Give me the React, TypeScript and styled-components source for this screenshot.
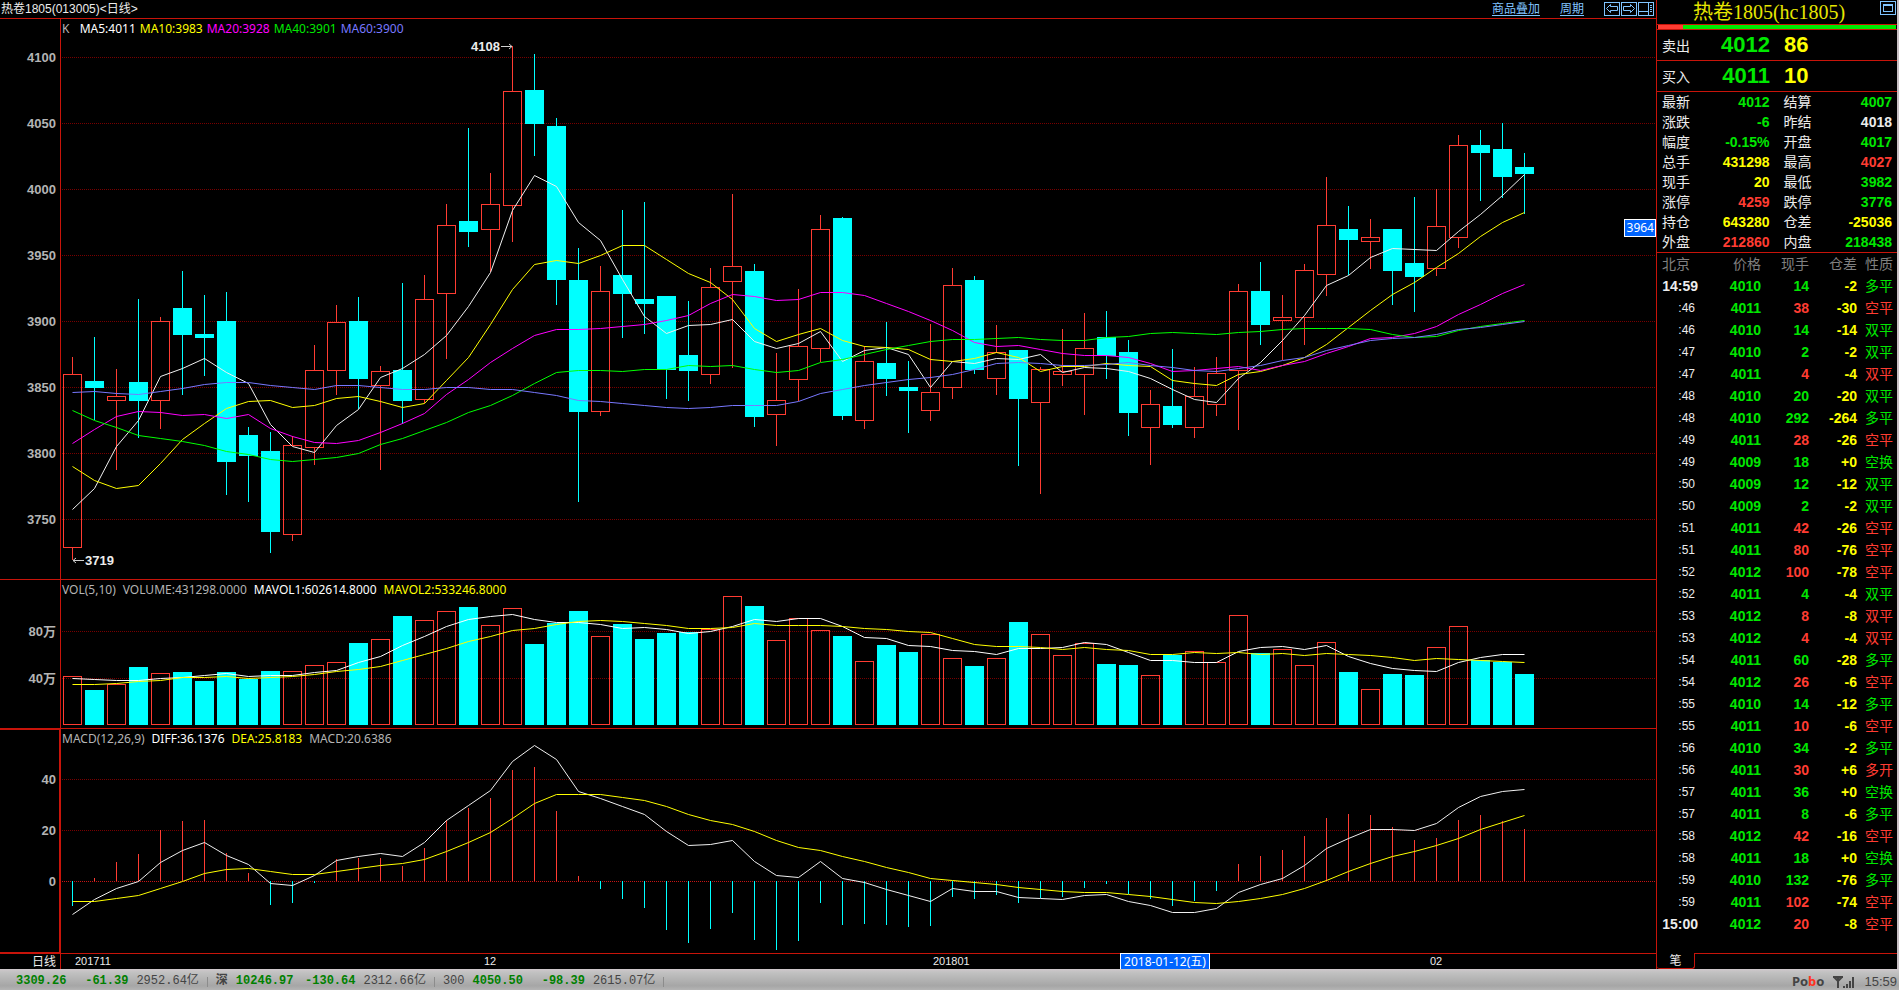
import React from "react";
import styled, { createGlobalStyle, css } from "styled-components";

/* ---------- palette ---------- */
const c = {
  line: "#c8140a",
  grid: "#780000",
  up: "#ff3c32",
  down: "#00ffff",
  green: "#00e800",
  yellow: "#ffff00",
  white: "#ececec",
  gray: "#b4b4b4",
  dim: "#808080",
  magenta: "#ff00ff",
  violet: "#7878ff",
  link: "#80c4ff",
  badge: "#0064ff",
};

const sans = `"Liberation Sans", "Noto Sans CJK SC", sans-serif`;
const narrow = `"Noto Sans", "Noto Sans CJK SC", sans-serif`;

/* ---------- data ---------- */
type Candle = [dir: "u" | "d", high: number, top: number, bottom: number, low: number];

/* Chart rows, counted in pixels from the top of the window. */
const candles: Candle[] = [
  ["u", 357, 374, 547, 560], ["d", 337, 381, 388, 420], ["u", 369, 396, 400, 470], ["d", 299, 382, 401, 438],
  ["u", 317, 321, 400, 429], ["d", 271, 308, 335, 395], ["d", 295, 334, 338, 376], ["d", 292, 321, 462, 495],
  ["d", 427, 435, 456, 502], ["d", 432, 451, 532, 553], ["u", 436, 445, 534, 541], ["u", 345, 370, 447, 465],
  ["u", 305, 322, 370, 395], ["d", 297, 321, 379, 409], ["u", 366, 371, 385, 470], ["d", 283, 370, 401, 424],
  ["u", 275, 299, 399, 403], ["u", 204, 225, 293, 359], ["d", 128, 221, 232, 247], ["u", 173, 204, 229, 272],
  ["u", 46, 91, 205, 242], ["d", 54, 90, 124, 156], ["d", 118, 126, 280, 305], ["d", 248, 280, 412, 502],
  ["u", 266, 291, 411, 416], ["d", 210, 275, 294, 338], ["d", 202, 299, 304, 334], ["d", 296, 296, 370, 399],
  ["d", 301, 355, 371, 401], ["u", 268, 287, 374, 384], ["u", 194, 266, 281, 368], ["d", 264, 271, 417, 427],
  ["u", 353, 400, 414, 446], ["u", 289, 346, 379, 401], ["u", 215, 229, 348, 362], ["d", 217, 218, 416, 420],
  ["u", 346, 361, 420, 429], ["d", 322, 363, 379, 396], ["d", 361, 387, 391, 433], ["u", 324, 392, 410, 421],
  ["u", 268, 285, 387, 399], ["d", 276, 280, 370, 374], ["u", 325, 352, 378, 395], ["d", 350, 350, 399, 466],
  ["u", 367, 369, 402, 494], ["u", 329, 371, 374, 386], ["u", 313, 348, 374, 415], ["d", 311, 337, 356, 379],
  ["d", 340, 352, 413, 436], ["u", 390, 404, 427, 465], ["d", 349, 406, 425, 428], ["u", 367, 396, 427, 438],
  ["u", 357, 373, 404, 416], ["u", 284, 291, 370, 430], ["d", 262, 291, 325, 345], ["u", 295, 317, 320, 360],
  ["u", 264, 270, 317, 345], ["u", 177, 225, 274, 296], ["d", 206, 229, 240, 275], ["u", 219, 237, 241, 269],
  ["d", 229, 229, 271, 305], ["d", 197, 263, 277, 312], ["u", 189, 226, 268, 276], ["u", 135, 145, 237, 248],
  ["d", 130, 145, 153, 201], ["d", 123, 149, 177, 198], ["d", 153, 167, 174, 214],
];

const ma5 = [509, 488, 446, 420, 376, 368, 358, 372, 383, 424, 446, 452, 425, 409, 377, 368, 354, 335, 306, 272, 210, 175, 186, 222, 240, 279, 316, 333, 325, 324, 319, 341, 348, 343, 331, 361, 350, 347, 354, 387, 361, 363, 358, 359, 354, 372, 367, 368, 371, 378, 389, 399, 402, 378, 362, 340, 315, 285, 275, 257, 248, 249, 250, 231, 214, 195, 174];
const ma10 = [466, 480, 488, 485, 463, 439, 423, 408, 401, 400, 407, 405, 398, 396, 401, 407, 403, 380, 357, 324, 289, 264, 260, 263, 255, 245, 245, 259, 273, 282, 299, 328, 341, 334, 328, 340, 346, 347, 349, 359, 361, 358, 352, 357, 371, 366, 366, 363, 365, 366, 380, 383, 385, 374, 371, 365, 357, 344, 327, 310, 294, 282, 267, 253, 236, 222, 212];
const ma20 = [443, 429, 416, 411, 412, 415, 414, 418, 414, 428, 436, 442, 443, 440, 432, 423, 413, 394, 379, 362, 348, 335, 329, 329, 328, 326, 324, 320, 315, 303, 294, 296, 300, 299, 292, 292, 295, 303, 311, 320, 330, 342, 346, 345, 349, 353, 355, 355, 357, 363, 371, 370, 368, 366, 370, 365, 361, 353, 346, 338, 337, 333, 326, 314, 304, 293, 284];
const ma40 = [410, 420, 427, 435, 438, 441, 445, 451, 454, 459, 461, 459, 457, 453, 444, 438, 430, 422, 412, 405, 395, 383, 372, 370, 370, 371, 369, 369, 365, 366, 365, 369, 372, 370, 362, 359, 354, 349, 345, 341, 339, 339, 338, 337, 339, 340, 340, 337, 336, 333, 332, 333, 334, 332, 331, 329, 328, 328, 328, 329, 334, 337, 336, 330, 326, 323, 320];
const ma60 = [392, 391, 393, 394, 391, 388, 384, 382, 382, 385, 387, 389, 385, 385, 387, 389, 389, 387, 387, 389, 389, 392, 395, 400, 401, 403, 405, 407, 408, 407, 405, 405, 405, 401, 393, 389, 385, 382, 379, 377, 374, 369, 363, 362, 363, 365, 365, 364, 362, 365, 367, 370, 371, 368, 365, 360, 357, 350, 345, 340, 338, 337, 334, 329, 327, 324, 321];

const volume = [676, 690, 684, 667, 673, 672, 681, 672, 679, 671, 671, 665, 662, 643, 639, 616, 620, 611, 607, 625, 608, 644, 623, 611, 636, 624, 639, 633, 632, 629, 596, 606, 640, 618, 630, 636, 661, 645, 652, 634, 658, 666, 658, 622, 634, 655, 643, 664, 665, 675, 655, 651, 662, 615, 653, 649, 665, 642, 672, 689, 674, 675, 647, 626, 660, 662, 674];
const mavol1 = [678, 679, 680, 680, 678, 677, 675, 673, 676, 675, 675, 672, 670, 662, 656, 645, 636, 626, 619, 616, 614, 619, 622, 622, 624, 628, 627, 629, 633, 631, 626, 619, 621, 618, 618, 626, 637, 638, 645, 646, 650, 651, 654, 648, 648, 647, 642, 644, 652, 660, 660, 662, 662, 651, 647, 646, 649, 645, 656, 663, 668, 670, 671, 662, 657, 654, 654];
const mavol2 = [684, 684, 683, 681, 680, 677, 677, 676, 678, 677, 676, 674, 671, 669, 666, 660, 654, 648, 641, 636, 630, 628, 624, 621, 620, 621, 623, 625, 628, 628, 627, 623, 625, 625, 625, 626, 628, 629, 631, 632, 638, 644, 646, 646, 647, 649, 647, 649, 650, 654, 654, 652, 653, 652, 654, 653, 655, 653, 654, 655, 657, 660, 658, 659, 660, 661, 662];

const macd = [906, 878, 862, 854, 830, 821, 820, 853, 873, 905, 903, 883, 859, 858, 858, 866, 848, 820, 808, 798, 770, 767, 811, 876, 889, 899, 908, 930, 943, 929, 913, 940, 950, 941, 903, 925, 924, 925, 927, 926, 897, 899, 895, 903, 898, 897, 888, 884, 894, 899, 906, 901, 891, 864, 856, 850, 836, 818, 814, 815, 827, 840, 838, 820, 815, 821, 829];
const diff = [914, 899, 888, 881, 862, 850, 842, 855, 864, 883, 885, 875, 860, 856, 853, 856, 842, 820, 805, 790, 761, 745, 759, 791, 798, 806, 814, 831, 845, 844, 840, 861, 875, 877, 861, 878, 882, 889, 895, 901, 888, 891, 891, 897, 898, 899, 895, 894, 901, 905, 912, 912, 908, 892, 884, 878, 865, 848, 838, 829, 829, 830, 823, 807, 796, 791, 789];
const dea = [901, 901, 898, 895, 888, 881, 873, 869, 868, 871, 874, 874, 871, 868, 865, 863, 859, 851, 842, 832, 818, 803, 794, 794, 794, 797, 800, 806, 814, 820, 824, 831, 840, 847, 850, 856, 861, 867, 872, 878, 880, 882, 884, 887, 889, 891, 892, 892, 894, 896, 899, 902, 903, 901, 898, 894, 888, 880, 871, 863, 856, 851, 845, 838, 829, 822, 815];

type Tone = "g" | "r" | "y" | "w";
const tone: Record<Tone, string> = { g: c.green, r: c.up, y: c.yellow, w: c.white };

const stats: [string, string, Tone, string, string, Tone][] = [
  ["最新", "4012", "g", "结算", "4007", "g"],
  ["涨跌", "-6", "g", "昨结", "4018", "w"],
  ["幅度", "-0.15%", "g", "开盘", "4017", "g"],
  ["总手", "431298", "y", "最高", "4027", "r"],
  ["现手", "20", "y", "最低", "3982", "g"],
  ["涨停", "4259", "r", "跌停", "3776", "g"],
  ["持仓", "643280", "y", "仓差", "-25036", "y"],
  ["外盘", "212860", "r", "内盘", "218438", "g"],
];

const ticks: [string, number, number, Tone, string, string][] = [
  ["14:59", 4010, 14, "g", "-2", "多平"],
  [":46", 4011, 38, "r", "-30", "空平"],
  [":46", 4010, 14, "g", "-14", "双平"],
  [":47", 4010, 2, "g", "-2", "双平"],
  [":47", 4011, 4, "r", "-4", "双平"],
  [":48", 4010, 20, "g", "-20", "双平"],
  [":48", 4010, 292, "g", "-264", "多平"],
  [":49", 4011, 28, "r", "-26", "空平"],
  [":49", 4009, 18, "g", "+0", "空换"],
  [":50", 4009, 12, "g", "-12", "双平"],
  [":50", 4009, 2, "g", "-2", "双平"],
  [":51", 4011, 42, "r", "-26", "空平"],
  [":51", 4011, 80, "r", "-76", "空平"],
  [":52", 4012, 100, "r", "-78", "空平"],
  [":52", 4011, 4, "g", "-4", "双平"],
  [":53", 4012, 8, "r", "-8", "双平"],
  [":53", 4012, 4, "r", "-4", "双平"],
  [":54", 4011, 60, "g", "-28", "多平"],
  [":54", 4012, 26, "r", "-6", "空平"],
  [":55", 4010, 14, "g", "-12", "多平"],
  [":55", 4011, 10, "r", "-6", "空平"],
  [":56", 4010, 34, "g", "-2", "多平"],
  [":56", 4011, 30, "r", "+6", "多开"],
  [":57", 4011, 36, "g", "+0", "空换"],
  [":57", 4011, 8, "g", "-6", "多平"],
  [":58", 4012, 42, "r", "-16", "空平"],
  [":58", 4011, 18, "g", "+0", "空换"],
  [":59", 4010, 132, "g", "-76", "多平"],
  [":59", 4011, 102, "r", "-74", "空平"],
  ["15:00", 4012, 20, "r", "-8", "空平"],
];

/* ---------- page ---------- */
const GlobalStyle = createGlobalStyle`
  * { box-sizing: border-box; }
  body { margin: 0; background: #000; font-family: ${sans}; }
  button { font: inherit; margin: 0; padding: 0; border: 0; background: none; color: inherit; }
`;

const Page = styled.div`
  display: flex;
  flex-direction: column;
  min-height: 100vh;
  color: ${c.white};
  background: #000;
`;

const Workspace = styled.div`
  flex: 1;
  display: flex;
`;

const ChartColumn = styled.main`
  flex: 1;
  min-width: 0;
  display: flex;
  flex-direction: column;
`;

const TitleBar = styled.header`
  display: flex;
  align-items: center;
  justify-content: space-between;
  height: 19px;
  padding: 0 1px;
  border-bottom: 1px solid ${c.line};
  font-size: 12px;
  line-height: 18px;
`;

const TitleText = styled.h1`
  margin: 0;
  font-size: 12px;
  font-weight: 400;
`;

const Tools = styled.nav`
  display: flex;
  align-items: center;
  gap: 20px;
`;

const ToolLink = styled.a`
  color: ${c.link};
  text-decoration: underline;
  text-underline-offset: 2px;
`;

const ToolIcons = styled.div`
  display: flex;
  gap: 1px;
  padding-right: 1px;
`;

const IconButton = styled.button`
  display: block;
  width: 16px;
  height: 14px;
  color: ${c.link};
  svg { display: block; }
`;

const Pane = styled.section`
  display: flex;
  border-bottom: 1px solid ${c.line};
`;

const Axis = styled.div<{ $active?: boolean }>`
  display: flex;
  align-items: flex-end;
  width: 61px;
  border-right: 1px solid ${c.line};
  ${(p) => p.$active && css`box-shadow: inset 0 1px ${c.line}, inset 0 -1px ${c.line}, inset -1px 0 ${c.line};`}
  svg { display: block; }
`;

const Plot = styled.div`
  position: relative;
  flex: 1;
  min-width: 0;
`;

const Legend = styled.div<{ $gap: number }>`
  display: flex;
  gap: ${(p) => p.$gap}px;
  height: 20px;
  padding-left: 1px;
  font: 12px/20px ${narrow};
  white-space: pre;
`;

const LegendItem = styled.span<{ $color: string }>`
  color: ${(p) => p.$color};
`;

const Drawing = styled.svg`
  display: block;
  width: 100%;
  overflow: visible;
`;

const AxisText = styled.text`
  font: bold 13px ${sans};
  fill: ${c.gray};
`;

const MarkText = styled.text`
  font: bold 13px ${sans};
  fill: ${c.white};
`;

const PriceBadge = styled.div`
  position: absolute;
  right: 0;
  top: 200px;
  height: 18px;
  padding: 0 1px 0 2px;
  border: 1px solid #fff;
  background: ${c.badge};
  color: #fff;
  font: 12px/16px ${narrow};
`;

const TimeRow = styled.div`
  display: flex;
  height: 15px;
`;

const PeriodButton = styled.button`
  width: 61px;
  padding-right: 4px;
  border-right: 1px solid ${c.line};
  font-size: 12px;
  line-height: 14px;
  text-align: right;
`;

const TimeScale = styled.div`
  position: relative;
  flex: 1;
`;

const TimeText = styled.text`
  font: 11px ${sans};
  fill: ${c.white};
`;

const DateBadge = styled.div`
  position: absolute;
  left: 1059px;
  top: -1px;
  height: 16px;
  width: 90px;
  border: 1px solid #fff;
  border-bottom: 0;
  background: ${c.badge};
  color: #fff;
  font: 12px/16px ${narrow};
  text-align: center;
  white-space: nowrap;
`;

/* ---------- quote panel ---------- */
const QuotePanel = styled.aside`
  display: flex;
  flex-direction: column;
  width: 243px;
  border-left: 1px solid ${c.line};
  border-right: 2px solid #c8c0c4;
`;

const QuoteTitle = styled.div`
  position: relative;
  height: 25px;
  border-bottom: 1px solid ${c.line};
  padding-right: 16px;
  color: #e6e600;
  font: 20px/25px "Liberation Serif", "Noto Sans CJK SC", serif;
  text-align: center;
`;

const WindowButton = styled(IconButton)`
  position: absolute;
  right: 1px;
  top: 1px;
`;

const Balance = styled.div`
  display: flex;
  height: 5px;
  padding: 0 1px;
  border-bottom: 1px solid ${c.line};
`;

const BalancePart = styled.span<{ $color: string; $share: number }>`
  flex: ${(p) => p.$share};
  background: ${(p) => p.$color};
`;

const BookRow = styled.div`
  display: grid;
  grid-template-columns: 40px 62px 1fr;
  column-gap: 6px;
  align-items: center;
  height: 31px;
  padding-left: 5px;
  border-bottom: 1px solid ${c.line};
  font-size: 14px;
`;

const BookNumber = styled.strong<{ $color: string }>`
  color: ${(p) => p.$color};
  font-size: 22px;
  line-height: 30px;
  text-align: right;
  & + & { text-align: left; padding-left: 8px; }
`;

const Stats = styled.table`
  width: 100%;
  border-spacing: 0;
  table-layout: fixed;
  border-bottom: 1px solid ${c.line};
  font-size: 14px;
  th, td { padding: 0; height: 20px; line-height: 20px; }
  th { font-weight: 400; text-align: left; width: 40px; padding-left: 5px; }
  th:nth-of-type(2) { padding-left: 14px; width: 55px; }
`;

const StatValue = styled.td<{ $color: string }>`
  color: ${(p) => p.$color};
  font-weight: 700;
  text-align: right;
  &:last-child { padding-right: 5px; }
`;

const Ticks = styled.table`
  width: 100%;
  border-spacing: 0;
  table-layout: fixed;
  font-size: 14px;
  th, td { padding: 0; height: 22px; line-height: 22px; text-align: right; }
  th { color: ${c.dim}; font-weight: 400; }
  th:first-child { width: 44px; padding-left: 5px; text-align: left; }
  th:nth-child(2) { width: 60px; }
  th:nth-child(3), th:nth-child(4) { width: 48px; }
  th:last-child, td:last-child { padding-right: 4px; }
`;

const TimeCell = styled.td<{ $full: boolean }>`
  font-size: ${(p) => (p.$full ? 14 : 12)}px;
  font-weight: ${(p) => (p.$full ? 700 : 400)};
  && { padding-right: ${(p) => (p.$full ? 3 : 6)}px; }
`;

const NumberCell = styled.td<{ $color: string }>`
  color: ${(p) => p.$color};
  font-weight: 700;
`;

const KindCell = styled.td<{ $color: string }>`
  color: ${(p) => p.$color};
`;

const TabRow = styled.div`
  display: flex;
  height: 16px;
  margin-top: auto;
`;

const Tab = styled.button`
  width: 38px;
  border-right: 1px solid ${c.line};
  border-bottom: 1px solid ${c.line};
  border-radius: 0 0 3px 3px;
  font-size: 12px;
  line-height: 14px;
`;

const TabFill = styled.div`
  flex: 1;
  border-top: 1px solid ${c.line};
`;

/* ---------- status bar ---------- */
const StatusBar = styled.footer`
  display: flex;
  align-items: center;
  height: 21px;
  padding: 4px 2px 0 8px;
  background: linear-gradient(#d0c8cc, #c2c2c2 15%, #a6a6a6 80%, #b4b4b4);
  color: #444;
  font: 12px/17px "Liberation Mono", "Noto Sans CJK SC", monospace;
`;

const IndexQuote = styled.div`
  display: flex;
  gap: 8px;
  height: 17px;
  padding: 0 8px;
  white-space: nowrap;
  & + &::before {
    content: "";
    align-self: center;
    width: 1px;
    height: 10px;
    margin-left: -8px;
    background: #8c8c8c;
  }
`;

const IndexFigure = styled.strong<{ $wide?: boolean }>`
  color: #008000;
  ${(p) => p.$wide && css`width: 54px; text-align: right;`}
`;

const StatusRight = styled.div`
  display: flex;
  align-items: center;
  gap: 9px;
  margin-left: auto;
  font: 13px/17px ${sans};
`;

const Brand = styled.strong`
  font: bold 13px/17px "Noto Sans", sans-serif;
  em { color: #ff3220; font-style: normal; }
`;

/* ---------- chart drawing ---------- */
const STEP = 22;
const cx = (i: number) => 11 + STEP * i;

const Trend = ({ rows, color }: { rows: number[]; color: string }) => (
  <polyline
    points={rows.map((y, i) => `${cx(i) + 0.5},${y + 0.5}`).join(" ")}
    fill="none"
    stroke={color}
    strokeWidth="1"
  />
);

const GridLines = ({ rows }: { rows: number[] }) => (
  <>
    {rows.map((y) => (
      <line key={y} x1="1" x2="100%" y1={y + 0.5} y2={y + 0.5} stroke={c.grid} strokeDasharray="1 1" shapeRendering="crispEdges" />
    ))}
  </>
);

const Bar = ({ i, dir, top, bottom }: { i: number; dir: "u" | "d"; top: number; bottom: number }) =>
  dir === "u" ? (
    <rect x={cx(i) - 8.5} y={top + 0.5} width="18" height={bottom - top} fill="none" stroke={c.up} />
  ) : (
    <rect x={cx(i) - 9} y={top} width="19" height={bottom - top} fill={c.down} />
  );

const Surface = ({ top, height, label, children }: { top: number; height: number; label: string; children: React.ReactNode }) => (
  <Drawing height={height} role="img" aria-label={label}>
    <g transform={`translate(0 ${-top})`}>{children}</g>
  </Drawing>
);

const Scale = ({ top, height, marks }: { top: number; height: number; marks: [string, number][] }) => (
  <svg width="60" height={height}>
    {marks.map(([label, y]) => (
      <AxisText key={label} x="56" y={y - top + 5} textAnchor="end">{label}</AxisText>
    ))}
  </svg>
);

const priceMarks: [string, number][] = [
  ["4100", 57], ["4050", 123], ["4000", 189], ["3950", 255], ["3900", 321], ["3850", 387], ["3800", 453], ["3750", 519],
];
const volumeMarks: [string, number][] = [["80万", 631], ["40万", 678]];
const macdMarks: [string, number][] = [["40", 779], ["20", 830], ["0", 881]];

const PricePane = () => (
  <Pane>
    <Axis><Scale top={39} height={540} marks={priceMarks} /></Axis>
    <Plot>
      <Legend $gap={4}>
        <LegendItem $color={c.gray}>{"K  "}</LegendItem>
        <LegendItem $color="#fff">MA5:4011</LegendItem>
        <LegendItem $color={c.yellow}>MA10:3983</LegendItem>
        <LegendItem $color={c.magenta}>MA20:3928</LegendItem>
        <LegendItem $color={c.green}>MA40:3901</LegendItem>
        <LegendItem $color={c.violet}>MA60:3900</LegendItem>
      </Legend>
      <Surface top={39} height={540} label="K线图">
        <GridLines rows={priceMarks.map((m) => m[1])} />
        <g shapeRendering="crispEdges">
          {candles.map(([dir, high, top, bottom, low], i) => (
            <g key={i}>
              <path d={`M${cx(i) + 0.5} ${high}V${top}M${cx(i) + 0.5} ${bottom}V${low}`} stroke={dir === "u" ? c.up : c.down} />
              <Bar i={i} dir={dir} top={top} bottom={bottom} />
            </g>
          ))}
        </g>
        <Trend rows={ma5} color="#f0f0f0" />
        <Trend rows={ma10} color={c.yellow} />
        <Trend rows={ma20} color={c.magenta} />
        <Trend rows={ma40} color="#00ff00" />
        <Trend rows={ma60} color={c.violet} />
        <MarkText x="439" y="51" textAnchor="end">4108</MarkText>
        <path d="M440 46.5h11M448 44l3 2.5l-3 2.5" fill="none" stroke="#d0d0d0" />
        <MarkText x="24" y="565">3719</MarkText>
        <path d="M23 560.5h-11M15 558l-3 2.5l3 2.5" fill="none" stroke="#d0d0d0" />
      </Surface>
      <PriceBadge>3964</PriceBadge>
    </Plot>
  </Pane>
);

const VolumePane = () => (
  <Pane>
    <Axis><Scale top={600} height={128} marks={volumeMarks} /></Axis>
    <Plot>
      <Legend $gap={7}>
        <LegendItem $color={c.gray}>VOL(5,10)</LegendItem>
        <LegendItem $color={c.gray}>VOLUME:431298.0000</LegendItem>
        <LegendItem $color="#fff">MAVOL1:602614.8000</LegendItem>
        <LegendItem $color={c.yellow}>MAVOL2:533246.8000</LegendItem>
      </Legend>
      <Surface top={600} height={128} label="成交量">
        <GridLines rows={volumeMarks.map((m) => m[1])} />
        <g shapeRendering="crispEdges">
          {volume.map((top, i) => (
            <Bar key={i} i={i} dir={candles[i][0]} top={top} bottom={candles[i][0] === "u" ? 724 : 725} />
          ))}
        </g>
        <Trend rows={mavol1} color="#fff" />
        <Trend rows={mavol2} color={c.yellow} />
      </Surface>
    </Plot>
  </Pane>
);

const MacdPane = () => (
  <Pane>
    <Axis $active><Scale top={749} height={204} marks={macdMarks} /></Axis>
    <Plot>
      <Legend $gap={7}>
        <LegendItem $color={c.gray}>MACD(12,26,9)</LegendItem>
        <LegendItem $color="#fff">DIFF:36.1376</LegendItem>
        <LegendItem $color={c.yellow}>DEA:25.8183</LegendItem>
        <LegendItem $color={c.gray}>MACD:20.6386</LegendItem>
      </Legend>
      <Surface top={749} height={204} label="MACD">
        <GridLines rows={macdMarks.map((m) => m[1])} />
        <line x1="1" x2="100%" y1="881.5" y2="881.5" stroke="#c81414" strokeDasharray="1 1" shapeRendering="crispEdges" />
        <g shapeRendering="crispEdges">
          {macd.map((y, i) => (
            <path key={i} d={`M${cx(i) + 0.5} 881V${y}`} stroke={y < 881 ? c.up : c.down} />
          ))}
        </g>
        <Trend rows={diff} color="#f0f0f0" />
        <Trend rows={dea} color={c.yellow} />
      </Surface>
    </Plot>
  </Pane>
);

/* ---------- icons ---------- */
const BoxIcon = ({ children }: { children: React.ReactNode }) => (
  <svg width="16" height="14" viewBox="0 0 16 14" fill="none" stroke="currentColor" aria-hidden="true">
    <rect x="0.5" y="0.5" width="15" height="13" />
    {children}
  </svg>
);

const SignalIcon = () => (
  <svg width="22" height="14" viewBox="0 0 22 14" fill="none" stroke="#444" strokeWidth="2" aria-label="信号">
    <path d="M0 2H10M1 2l4 4l4-4M5 2V13" />
    <path d="M11 13v-2M14 13v-4M17 13v-7M20 13V2" />
  </svg>
);

export default function App() {
  return (
    <>
      <GlobalStyle />
      <Page>
        <Workspace>
          <ChartColumn>
            <TitleBar>
              <TitleText>热卷1805(013005)&lt;日线&gt;</TitleText>
              <Tools>
                <ToolLink href="#overlay">商品叠加</ToolLink>
                <ToolLink href="#period">周期</ToolLink>
                <ToolIcons>
                  <IconButton aria-label="上一个">
                    <BoxIcon><path d="M2.5 6.5l4-4v2h7v4h-7v2z" /></BoxIcon>
                  </IconButton>
                  <IconButton aria-label="下一个">
                    <BoxIcon><path d="M13.5 6.5l-4-4v2h-7v4h7v2z" /></BoxIcon>
                  </IconButton>
                  <IconButton aria-label="布局">
                    <BoxIcon><path d="M10.5 0V14M0 9.5H10M12 3.5h2M12 5.5h2M12 7.5h2M12 9.5h2" /></BoxIcon>
                  </IconButton>
                </ToolIcons>
              </Tools>
            </TitleBar>
            <PricePane />
            <VolumePane />
            <MacdPane />
            <TimeRow>
              <PeriodButton>日线</PeriodButton>
              <TimeScale>
                <Drawing height="15">
                  <TimeText x="14" y="11">201711</TimeText>
                  <TimeText x="423" y="11">12</TimeText>
                  <TimeText x="872" y="11">201801</TimeText>
                  <TimeText x="1369" y="11">02</TimeText>
                </Drawing>
                <DateBadge>2018-01-12(五)</DateBadge>
              </TimeScale>
            </TimeRow>
          </ChartColumn>

          <QuotePanel>
            <QuoteTitle>
              热卷1805(hc1805)
              <WindowButton aria-label="最大化">
                <BoxIcon><rect x="3.5" y="3.5" width="9" height="7" /><path d="M3 4.5H13" /></BoxIcon>
              </WindowButton>
            </QuoteTitle>
            <Balance>
              <BalancePart $color={c.up} $share={10} />
              <BalancePart $color={c.green} $share={86} />
            </Balance>
            <BookRow>
              <span>卖出</span>
              <BookNumber $color={c.green}>4012</BookNumber>
              <BookNumber $color={c.yellow}>86</BookNumber>
            </BookRow>
            <BookRow>
              <span>买入</span>
              <BookNumber $color={c.green}>4011</BookNumber>
              <BookNumber $color={c.yellow}>10</BookNumber>
            </BookRow>
            <Stats>
              <tbody>
                {stats.map(([l1, v1, t1, l2, v2, t2]) => (
                  <tr key={l1}>
                    <th scope="row">{l1}</th>
                    <StatValue $color={tone[t1]}>{v1}</StatValue>
                    <th scope="row">{l2}</th>
                    <StatValue $color={tone[t2]}>{v2}</StatValue>
                  </tr>
                ))}
              </tbody>
            </Stats>
            <Ticks>
              <thead>
                <tr>
                  <th>北京</th>
                  <th>价格</th>
                  <th>现手</th>
                  <th>仓差</th>
                  <th>性质</th>
                </tr>
              </thead>
              <tbody>
                {ticks.map(([time, price, hands, t, change, kind], i) => (
                  <tr key={i}>
                    <TimeCell $full={time.length > 3}>{time}</TimeCell>
                    <NumberCell $color={c.green}>{price}</NumberCell>
                    <NumberCell $color={tone[t]}>{hands}</NumberCell>
                    <NumberCell $color={c.yellow}>{change}</NumberCell>
                    <KindCell $color={tone[t]}>{kind}</KindCell>
                  </tr>
                ))}
              </tbody>
            </Ticks>
            <TabRow>
              <Tab>笔</Tab>
              <TabFill />
            </TabRow>
          </QuotePanel>
        </Workspace>

        <StatusBar>
          <IndexQuote>
            <IndexFigure>3309.26</IndexFigure>
            <IndexFigure $wide>-61.39</IndexFigure>
            <span>2952.64亿</span>
          </IndexQuote>
          <IndexQuote>
            <strong>深</strong>
            <IndexFigure>10246.97</IndexFigure>
            <IndexFigure $wide>-130.64</IndexFigure>
            <span>2312.66亿</span>
          </IndexQuote>
          <IndexQuote>
            <span>300</span>
            <IndexFigure>4050.50</IndexFigure>
            <IndexFigure $wide>-98.39</IndexFigure>
            <span>2615.07亿</span>
          </IndexQuote>
          <IndexQuote />
          <StatusRight>
            <Brand>Po<em>b</em>o</Brand>
            <SignalIcon />
            <time>15:59</time>
          </StatusRight>
        </StatusBar>
      </Page>
    </>
  );
}
